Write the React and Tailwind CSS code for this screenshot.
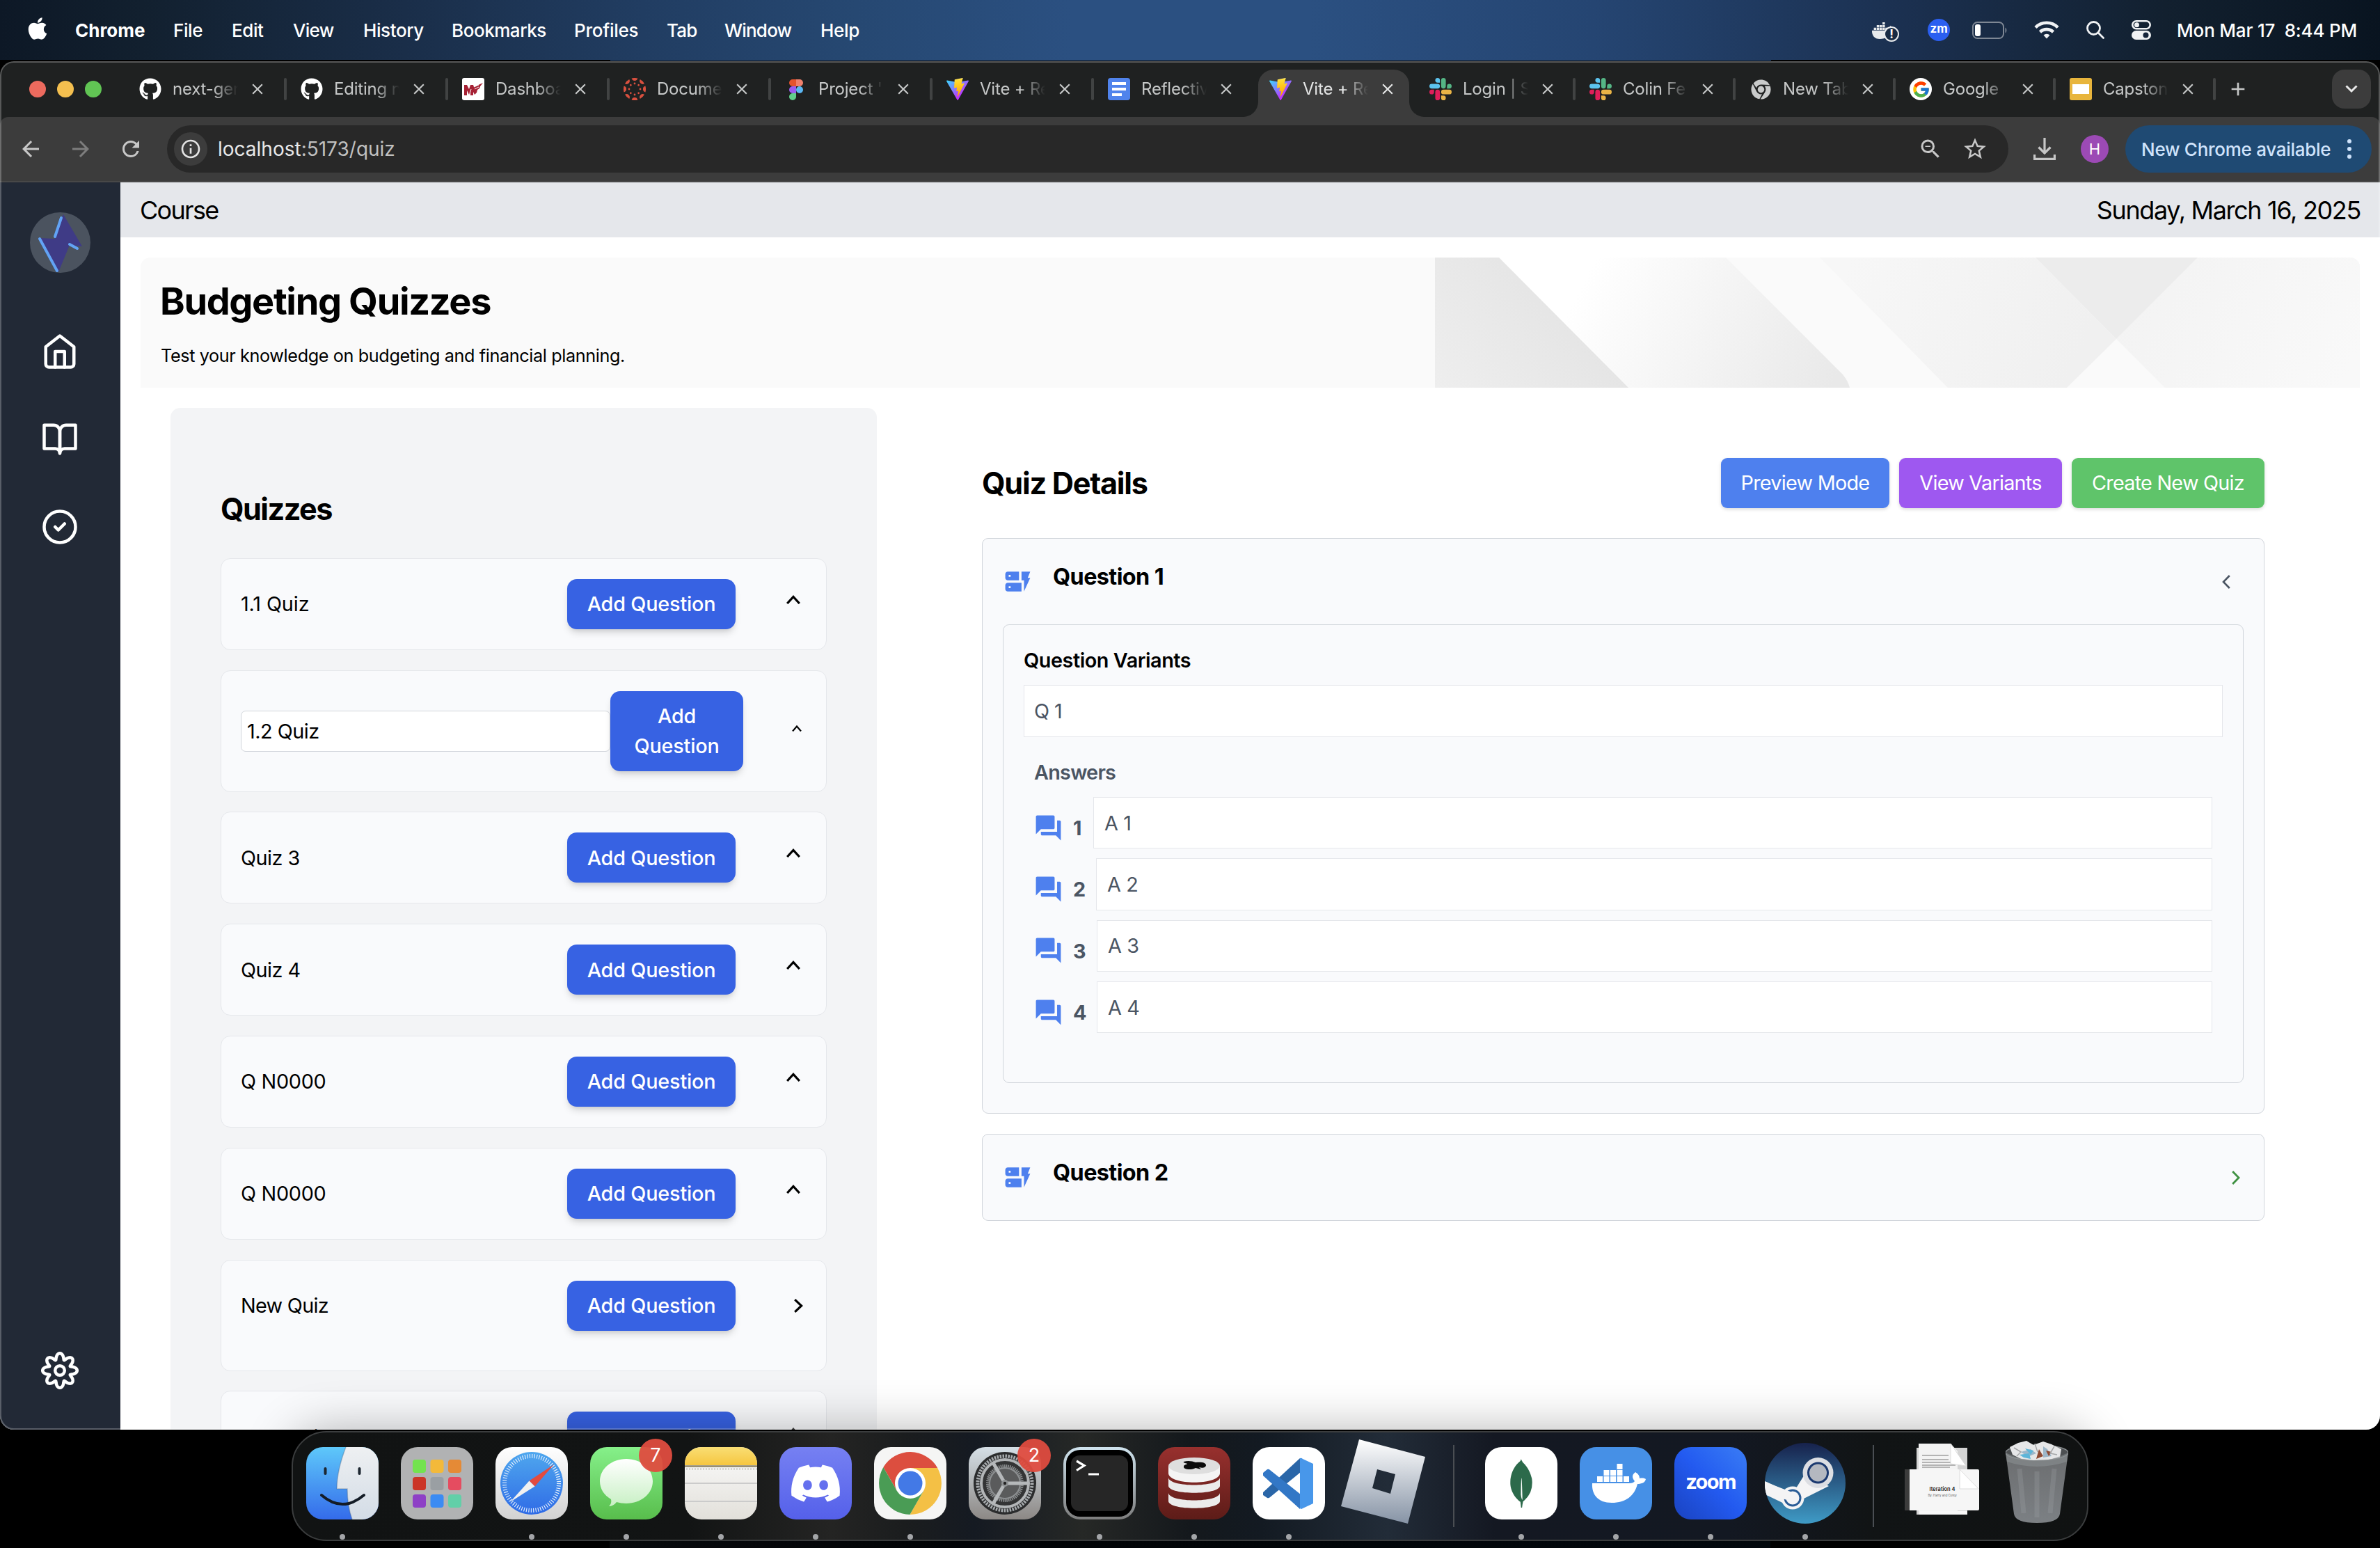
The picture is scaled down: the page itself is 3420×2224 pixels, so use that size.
import React from "react";
import { FaApple, FaGithub, FaDiscord, FaDocker, FaChrome } from "react-icons/fa";
import { FiHome, FiBookOpen } from "react-icons/fi";
import { FcGoogle } from "react-icons/fc";
import { MdDynamicForm, MdQuestionAnswer, MdArrowBack, MdArrowForward, MdRefresh, MdInfoOutline, MdZoomOut, MdStarBorder, MdClose, MdAdd } from "react-icons/md";
import { SiMongodb } from "react-icons/si";
import { CircleCheck } from "lucide-react";

/* ---------- small shared drawings ---------- */

function Vite() {
  return (
    <svg viewBox="0 0 256 257" className="h-8 w-8">
      <defs>
        <linearGradient id="va" x1="0%" x2="60%" y1="8%" y2="78%"><stop offset="0" stopColor="#41D1FF" /><stop offset="1" stopColor="#BD34FE" /></linearGradient>
        <linearGradient id="vb" x1="43%" x2="50%" y1="2%" y2="89%"><stop offset="0" stopColor="#FFEA83" /><stop offset=".1" stopColor="#FFDD35" /><stop offset="1" stopColor="#FFA800" /></linearGradient>
      </defs>
      <path fill="url(#va)" d="M255.153 37.938L134.897 252.976c-2.483 4.44-8.862 4.466-11.382.048L.875 37.958c-2.746-4.814 1.371-10.646 6.827-9.67l120.385 21.517a6.537 6.537 0 0 0 2.322-.004l117.867-21.483c5.438-.991 9.574 4.796 6.877 9.62Z" />
      <path fill="url(#vb)" d="M185.432.063L96.44 17.501a3.268 3.268 0 0 0-2.634 3.014l-5.474 92.456a3.268 3.268 0 0 0 3.997 3.378l24.777-5.718c2.318-.535 4.413 1.507 3.936 3.838l-7.361 36.047c-.495 2.426 1.782 4.5 4.151 3.78l15.304-4.649c2.372-.72 4.652 1.36 4.15 3.788l-11.698 56.621c-.732 3.542 3.979 5.473 5.943 2.437l1.313-2.028l72.516-144.72c1.215-2.423-.88-5.186-3.54-4.672l-25.505 4.922c-2.396.462-4.435-1.77-3.759-4.114l16.646-57.705c.677-2.35-1.37-4.583-3.769-4.113Z" />
    </svg>
  );
}

function Slack() {
  return (
    <svg viewBox="0 0 24 24" className="h-8 w-8">
      <path fill="#E01E5A" d="M5.042 15.165a2.528 2.528 0 0 1-2.52 2.523A2.528 2.528 0 0 1 0 15.165a2.527 2.527 0 0 1 2.522-2.52h2.52v2.52zM6.313 15.165a2.527 2.527 0 0 1 2.521-2.52 2.527 2.527 0 0 1 2.521 2.52v6.313A2.528 2.528 0 0 1 8.834 24a2.528 2.528 0 0 1-2.521-2.522v-6.313z" />
      <path fill="#5CC3EE" d="M8.834 5.042a2.528 2.528 0 0 1-2.521-2.52A2.528 2.528 0 0 1 8.834 0a2.528 2.528 0 0 1 2.521 2.522v2.52H8.834zM8.834 6.313a2.528 2.528 0 0 1 2.521 2.521 2.528 2.528 0 0 1-2.521 2.521H2.522A2.528 2.528 0 0 1 0 8.834a2.528 2.528 0 0 1 2.522-2.521h6.312z" />
      <path fill="#55B685" d="M18.956 8.834a2.528 2.528 0 0 1 2.522-2.521A2.528 2.528 0 0 1 24 8.834a2.528 2.528 0 0 1-2.522 2.521h-2.522V8.834zM17.688 8.834a2.528 2.528 0 0 1-2.523 2.521 2.527 2.527 0 0 1-2.52-2.521V2.522A2.527 2.527 0 0 1 15.165 0a2.528 2.528 0 0 1 2.523 2.522v6.312z" />
      <path fill="#E9B446" d="M15.165 18.956a2.528 2.528 0 0 1 2.523 2.522A2.528 2.528 0 0 1 15.165 24a2.527 2.527 0 0 1-2.52-2.522v-2.522h2.52zM15.165 17.688a2.527 2.527 0 0 1-2.52-2.523 2.526 2.526 0 0 1 2.52-2.52h6.313A2.527 2.527 0 0 1 24 15.165a2.528 2.528 0 0 1-2.522 2.523h-6.313z" />
    </svg>
  );
}

function Redhawk() {
  return (
    <svg viewBox="0 0 32 32" className="h-8 w-8">
      <rect width="32" height="32" rx="3" fill="#fff" />
      <path d="M3 25V10h4l3 6 2-6h4l1 3 13-6-4 5-1 3-3 2-1 4-3 3-2-4v5h-4v-7l-2 6-3-6v7z" fill="#a62134" />
      <path d="M17 13l7-3M18 16l6-3M11 22l2-6" stroke="#fff" strokeWidth="1" />
    </svg>
  );
}

function Canvas() {
  const spokes = [0, 45, 90, 135, 180, 225, 270, 315];
  return (
    <svg viewBox="0 0 32 32" className="h-8 w-8" fill="#d9503f">
      {spokes.map((a) => (
        <g key={a} transform={`rotate(${a} 16 16)`}>
          <path d="M11.600 .6a16 16 0 0 1 8.800 0a4.600 4.900 0 0 1-8.800 0z" />
          <circle cx="16" cy="8" r="1.400" />
        </g>
      ))}
    </svg>
  );
}

function Figma() {
  return (
    <svg viewBox="0 0 32 32" className="h-8 w-8">
      <path d="M11 2h5v10h-5a5 5 0 0 1 0-10z" fill="#e5532d" />
      <path d="M16 2h5a5 5 0 0 1 0 10h-5z" fill="#f0806c" />
      <path d="M11 12h5v10h-5a5 5 0 0 1 0-10z" fill="#9a5cf0" />
      <circle cx="21" cy="17" r="5" fill="#5bb7f4" />
      <path d="M11 22h5v5a5 5 0 1 1-5-5z" fill="#60cf8b" />
    </svg>
  );
}

const Docs = () => (
  <svg viewBox="0 0 32 32" className="h-8 w-8"><rect width="32" height="32" rx="4" fill="#5083ec" /><path d="M6 8h20M6 16h20M6 24h14" stroke="#fff" strokeWidth="4" /></svg>
);
const Slides = () => (
  <svg viewBox="0 0 32 32" className="h-8 w-8"><rect width="32" height="32" rx="3" fill="#e8b53c" /><rect x="4" y="9" width="24" height="14" fill="#fff" /></svg>
);
const Github = () => <FaGithub className="h-8 w-8 text-white" />;
const GreyChrome = () => <FaChrome className="h-[29px] w-[29px] text-[#c9cbcb]" />;
const Google = () => <span className="flex h-8 w-8 items-center justify-center rounded-full bg-white"><FcGoogle className="h-[27px] w-[27px]" /></span>;

/* ---------- menu bar ---------- */

const menus = [
  ["Chrome", "w-[141px] font-bold"],
  ["File", "w-[84px] tracking-[-0.4px]"],
  ["Edit", "w-[88px] tracking-[-0.4px]"],
  ["View", "w-[101px] tracking-[-0.7px]"],
  ["History", "w-[127px] tracking-[-0.4px]"],
  ["Bookmarks", "w-[176px] tracking-[-0.45px]"],
  ["Profiles", "w-[133px] tracking-[-0.25px]"],
  ["Tab", "w-[83px] tracking-[-0.8px]"],
  ["Window", "w-[138px] tracking-[-0.8px]"],
  ["Help", "w-[60px] tracking-[-0.3px]"],
];

function MenuBar() {
  return (
    <header className="flex h-[86px] shrink-0 items-center bg-[linear-gradient(90deg,#0d1826_0%,#12202f_6%,#1a2e49_17%,#213d62_27%,#264872_36%,#2b5081_45%,#2b5081_55%,#254572_67%,#1b3050_80%,#12202f_91%,#091420_100%)] text-[26px] font-medium text-white">
      <FaApple className="mb-1 ml-[38px] h-[36px] w-[32px]" />
      <nav className="ml-[38px] flex">
        {menus.map(([t, c]) => <span key={t} className={c}>{t}</span>)}
      </nav>
      <div className="ml-auto flex items-center pr-[33px]">
        <span className="relative mr-[40px] h-[32px] w-[38px]">
          <FaDocker className="h-[34px] w-[34px] -translate-x-0.5 text-[#e8eaec]" />
          <span className="absolute top-[11px] left-[15px] flex h-[22px] w-[22px] items-center justify-center rounded-full border-[2.5px] border-[#e8eaec] bg-[#182a43] text-[17px] leading-none font-bold">!</span>
        </span>
        <span className="mr-[32px] flex h-8 w-8 items-center justify-center rounded-full bg-[#2b5ff0] pb-[2px] text-[17px] font-bold">zm</span>
        <svg viewBox="0 0 51 25" className="mr-[38px] h-[25px] w-[51px]" fill="none">
          <rect x="1" y="1" width="44" height="23" rx="6.5" stroke="#7e8794" strokeWidth="2" />
          <rect x="4" y="4" width="8" height="17" rx="3" fill="#fff" />
          <path d="M47.500 8.500c2.500 1.500 2.500 6.500 0 8z" fill="#7e8794" />
        </svg>
        <svg viewBox="0 0 36 26" className="mr-[39px] h-[26px] w-[36px]" fill="none" stroke="#f0f2f4" strokeWidth="4.600">
          <path d="M2 9.500a22.500 22.500 0 0 1 32 0" />
          <path d="M8.500 16a13.500 13.500 0 0 1 19 0" />
          <path d="M13.500 20.500a6.500 6.500 0 0 1 9 0L18 25.500z" fill="#f0f2f4" stroke="none" />
        </svg>
        <svg viewBox="0 0 26 26" className="mr-[39px] h-[26px] w-[26px]" fill="none" stroke="#f0f2f4" strokeWidth="2.800" strokeLinecap="round">
          <circle cx="10.500" cy="10.500" r="9" /><path d="M17 17l7.500 7.500" />
        </svg>
        <svg viewBox="0 0 28 28" className="mr-[37px] h-[28px] w-[28px]" fill="none">
          <rect x="1.300" y="1.300" width="25.400" height="11" rx="5.500" stroke="#f0f2f4" strokeWidth="2.600" />
          <circle cx="7.500" cy="6.800" r="3.500" fill="#f0f2f4" />
          <rect x="0" y="15" width="28" height="13" rx="6.500" fill="#f0f2f4" />
          <circle cx="20.500" cy="21.500" r="4" fill="#15243a" />
        </svg>
        <span className="tracking-[-0.2px] whitespace-pre">Mon Mar 17  8:44 PM</span>
      </div>
    </header>
  );
}

/* ---------- browser chrome ---------- */

const tabs = [
  [Github, "next-ger"], [Github, "Editing n"], [Redhawk, "Dashboa"], [Canvas, "Docume"], [Figma, "Project '"],
  [Vite, "Vite + Re"], [Docs, "Reflectiv"], [Vite, "Vite + Re"], [Slack, "Login | S"], [Slack, "Colin Fe"],
  [GreyChrome, "New Tab"], [Google, "Google"], [Slides, "Capston"],
];

function Tab({ Icon, title, i }) {
  const active = i === 7;
  return (
    <div className={"relative flex h-[80px] shrink-0 items-center pl-[22px] " + (i < 7 ? "w-[232px]" : "w-[230px]")}>
      {active && (
        <svg viewBox="0 0 266 68" className="absolute bottom-0 left-[-17px] h-[68px] w-[266px]">
          <path d="M0 68a22 22 0 0 0 23-22V22A22 22 0 0 1 45 0H218a22 22 0 0 1 22 22V46a22 22 0 0 0 23 22z" fill="#3c3c3c" />
        </svg>
      )}
      <span className="relative flex h-8 w-8 items-center justify-center"><Icon /></span>
      <span className={"relative ml-4 w-[94px] overflow-hidden text-[24px] tracking-[-0.2px] whitespace-nowrap [mask-image:linear-gradient(to_right,black_62%,transparent_100%)] " + (active ? "text-[#e4e5e5]" : "text-[#c6c8c8]")}>{title}</span>
      <MdClose className={"relative ml-[15px] h-[26px] w-[26px] " + (active ? "text-[#e4e5e5]" : "text-[#c6c8c8]")} />
      {i !== 6 && i !== 7 && <span className="ml-auto h-8 w-[4px] translate-x-[2px] rounded bg-[#414343]" />}
    </div>
  );
}

function TabStrip() {
  return (
    <div className="flex h-[80px] shrink-0 items-center bg-[#1f2121]">
      <div className="flex w-[178px] shrink-0 gap-4 pl-[42px]">
        <span className="h-6 w-6 rounded-full bg-[#ec6a5e]" />
        <span className="h-6 w-6 rounded-full bg-[#f4bf4f]" />
        <span className="h-6 w-6 rounded-full bg-[#61c554]" />
      </div>
      {tabs.map(([Icon, title], i) => <Tab key={i} Icon={Icon} title={title} i={i} />)}
      <MdAdd className="ml-[18px] h-[32px] w-[32px] text-[#c6c8c8]" />
      <span className="mr-[13px] ml-auto flex h-14 w-14 items-center justify-center rounded-[18px] bg-[#3c3c3c]">
        <svg viewBox="0 0 18 12" className="h-3 w-[18px]" fill="none" stroke="#e8e8e8" strokeWidth="3"><path d="M1.500 1.500L9 9l7.500-7.500" /></svg>
      </span>
    </div>
  );
}

function Toolbar() {
  return (
    <div className="flex h-[94px] shrink-0 items-center rounded-t-[12px] border-b-2 border-[#484848] bg-[#3c3c3c] text-[#c7c7c7]">
      <MdArrowBack className="ml-[26px] h-9 w-9" />
      <MdArrowForward className="ml-[36px] h-9 w-9 text-[#7d7d7d]" />
      <MdRefresh className="ml-[36px] h-9 w-9" />
      <div className="ml-[34px] flex h-[68px] w-[2646px] items-center rounded-full bg-[#282828] pl-[10px]">
        <span className="flex h-12 w-12 items-center justify-center rounded-full bg-[#3c3c3c]">
          <MdInfoOutline className="h-8 w-8 text-[#e3e3e3]" />
        </span>
        <span className="ml-[15px] text-[28px] text-[#c0c0c0]"><span className="text-[#e8e8e8]">localhost</span>:5173/quiz</span>
        <MdZoomOut className="ml-auto h-9 w-9" />
        <MdStarBorder className="mr-[29px] ml-[27px] h-[38px] w-[38px]" />
      </div>
      <svg viewBox="0 0 32 32" className="ml-[36px] h-8 w-8" fill="none" stroke="#c7c7c7" strokeWidth="3.200">
        <path d="M16 0v21M7.500 13.500L16 22l8.500-8.500M1.600 24v6.400h28.800V24" />
      </svg>
      <span className="ml-[36px] flex h-10 w-10 items-center justify-center rounded-full bg-[#9c4ab5] text-[22px] text-white">H</span>
      <div className="ml-[24px] flex h-[68px] w-[354px] items-center rounded-full bg-[#1f4a73] pl-[23px] text-[26px] font-medium tracking-[-0.28px] text-[#cfe3fb]">
        New Chrome available
        <span className="mr-[29px] ml-auto flex flex-col gap-[5px]">
          <i className="h-[6px] w-[6px] rounded-full bg-[#cfe3fb]" /><i className="h-[6px] w-[6px] rounded-full bg-[#cfe3fb]" /><i className="h-[6px] w-[6px] rounded-full bg-[#cfe3fb]" />
        </span>
      </div>
    </div>
  );
}

/* ---------- web page ---------- */

function gearPath() {
  const p = [];
  for (let k = 0; k < 160; k++) {
    const t = (k / 160) * Math.PI * 2;
    const u = t - 0.05 * Math.sin(8 * t) * -1;
    const r = 20.4 + 4.4 * Math.cos(8 * t);
    p.push(`${(27 + r * Math.cos(u)).toFixed(2)} ${(27 + r * Math.sin(u)).toFixed(2)}`);
  }
  return "M" + p.join("L") + "Z";
}

function Sidebar() {
  return (
    <aside className="flex w-[173px] shrink-0 flex-col items-center bg-[#222936] pr-px text-white">
      <span className="mt-[43px] h-[87px] w-[87px] overflow-hidden rounded-full bg-[#4b535f]">
        <svg viewBox="0 0 87 87" className="h-full w-full" strokeLinecap="round">
          <path d="M46 7L48 3L75 49L57 47L41 86L14 37L36 38z" fill="#3f3b86" />
          <path d="M45 8L36 35M14 38L39 84M57 46L68 52" stroke="#62a3f5" strokeWidth="4" fill="none" />
        </svg>
      </span>
      <FiHome className="mt-[86px] h-[54px] w-[54px]" />
      <FiBookOpen className="mt-[72px] h-[54px] w-[54px]" />
      <CircleCheck className="mt-[72px] h-[54px] w-[54px]" strokeWidth={2} />
      <svg viewBox="0 0 54 54" className="mt-auto mb-[58px] h-[54px] w-[54px]" fill="none" stroke="#fff" strokeWidth="4.500">
        <path d={gearPath()} strokeLinejoin="round" /><circle cx="27" cy="27" r="6.800" />
      </svg>
    </aside>
  );
}

function Banner() {
  return (
    <section className="mx-[29px] mt-[29px] flex h-[187px] overflow-hidden rounded-t-[14px] bg-[#fafafa]">
      <div className="w-[1860px] shrink-0 pl-[28px]">
        <h1 className="mt-[30px] text-[54px] leading-[65px] font-bold tracking-[-1.35px]">Budgeting Quizzes</h1>
        <p className="mt-[28px] ml-px text-[25.2px] leading-[36px] tracking-[-0.37px]">Test your knowledge on budgeting and financial planning.</p>
      </div>
      <svg viewBox="0 0 1329 187" className="h-[187px] w-[1329px]">
        <defs>
          <linearGradient id="ba" gradientUnits="userSpaceOnUse" x1="0" y1="187" x2="180" y2="30"><stop offset="0" stopColor="#eeeeee" /><stop offset="1" stopColor="#e4e4e4" /></linearGradient>
          <linearGradient id="bb" gradientUnits="userSpaceOnUse" x1="200" y1="60" x2="540" y2="240"><stop offset="0" stopColor="#ffffff" /><stop offset="1" stopColor="#e9e9e9" /></linearGradient>
          <linearGradient id="bc" gradientUnits="userSpaceOnUse" x1="600" y1="0" x2="920" y2="150"><stop offset="0" stopColor="#f7f7f7" /><stop offset="1" stopColor="#f0f0f0" /></linearGradient>
          <linearGradient id="bd" gradientUnits="userSpaceOnUse" x1="960" y1="0" x2="1300" y2="187"><stop offset="0" stopColor="#f2f2f2" /><stop offset="1" stopColor="#f9f9f9" /></linearGradient>
        </defs>
        <rect width="1329" height="187" fill="#fafafa" />
        <path d="M0 0H418L586 168Q594 178 596 187H0z" fill="url(#bb)" />
        <path d="M0 0H92L278 187H0z" fill="url(#ba)" />
        <path d="M553 0H863L979 117L908 187H737z" fill="url(#bc)" />
        <path d="M1096 0H1329V187H1049L979 117z" fill="url(#bd)" />
        <path d="M863 0H1096L979 117z" fill="#ececec" />
      </svg>
    </section>
  );
}

const quizzes = [
  ["1.1 Quiz", "up", "tracking-[-0.1px]"], ["1.2 Quiz", "edit", "tracking-[-0.5px]"], ["Quiz 3", "up", "tracking-[-0.5px]"], ["Quiz 4", "up", "tracking-[-0.5px]"],
  ["Q N0000", "up", "tracking-[-0.3px]"], ["Q N0000", "up", "tracking-[-0.3px]"], ["New Quiz", "open", "tracking-[-0.7px]"], ["New Quiz", "up", "tracking-[-0.7px]"],
];

function Up({ small }) {
  return small
    ? <svg viewBox="0 0 14 9" className="mt-[-8px] mr-[7px] ml-auto h-[9px] w-[14px]" fill="none" stroke="#000" strokeWidth="2.200"><path d="M1 8.500L7 1.500l6 7" /></svg>
    : <svg viewBox="0 0 20 13" className="mt-[-13px] mr-[9px] ml-auto h-[13px] w-[20px]" fill="none" stroke="#000" strokeWidth="3.200"><path d="M1.200 12L10 2.400l8.800 9.600" /></svg>;
}

function QuizCard({ name, kind, track }) {
  const btn = "flex items-center justify-center rounded-[14px] bg-[#3762e3] text-center text-[28.8px] font-medium tracking-[-0.2px] text-white shadow-[0_7px_11px_-2px_rgba(0,0,0,0.14),0_4px_7px_-4px_rgba(0,0,0,0.12)]";
  if (kind === "edit")
    return (
      <div className="flex h-[175px] shrink-0 items-center rounded-[14px] border border-[#e5e7eb] bg-[#f9fafc] px-[28px]">
        <div className={"flex h-[59px] w-[531px] items-center rounded-[7px] border border-[#d1d5db] bg-white pl-[8px] text-[28.8px] " + track}>{name}</div>
        <span className={btn + " h-[115px] w-[191px] px-[20px] leading-[43.2px]"}>Add<br />Question</span>
        <Up small />
      </div>
    );
  return (
    <div className={"shrink-0 rounded-[14px] border border-[#e5e7eb] bg-[#f9fafc] px-[28px] pt-[29px] " + (kind === "open" ? "h-[160px]" : "h-[132px]")}>
      <div className="flex h-[72px] items-center">
        <span className={"w-[469px] text-[28.8px] " + track}>{name}</span>
        <span className={btn + " h-[72px] w-[242px]"}>Add Question</span>
        {kind === "open"
          ? <svg viewBox="0 0 13 20" className="mr-[5px] ml-auto h-5 w-[13px]" fill="none" stroke="#000" strokeWidth="3.200"><path d="M1.200 1.200L10.600 10l-9.400 8.800" /></svg>
          : <Up />}
      </div>
    </div>
  );
}

function QuizList() {
  return (
    <section className="ml-[72px] flex w-[1015px] shrink-0 flex-col gap-[28.8px] rounded-t-[14px] bg-[#f3f4f6] px-[72px] pt-[116px]">
      <h2 className="mb-[13px] h-[58px] text-[43.2px] leading-[58px] font-bold tracking-[-1.55px]">Quizzes</h2>
      {quizzes.map(([n, k, t], i) => <QuizCard key={i} name={n} kind={k} track={t} />)}
    </section>
  );
}

const answers = ["A 1", "A 2", "A 3", "A 4"];

function QuestionHead({ n, open }) {
  return (
    <div className="flex items-start">
      <MdDynamicForm className="mt-[40px] h-[43px] w-[43px] text-[#4e80ee]" />
      <h3 className="mt-[30px] ml-[29px] text-[32.4px] leading-[50px] font-bold tracking-[-0.6px]">Question {n}</h3>
      {open
        ? <svg viewBox="0 0 12 20" className="mt-[52px] mr-[19px] ml-auto h-5 w-3" fill="none" stroke="#4b5563" strokeWidth="2.600"><path d="M10.800 1L2 10l8.800 9" /></svg>
        : <svg viewBox="0 0 12 20" className="mt-[52px] mr-[5px] ml-auto h-5 w-3" fill="none" stroke="#3f9142" strokeWidth="2.800"><path d="M1.200 1L10 10l-8.800 9" /></svg>}
    </div>
  );
}

function Details() {
  return (
    <section className="ml-[151px] w-[1843px] pt-[72px]">
      <div className="flex h-[72px] items-center gap-[14px] text-[28.800px] tracking-[-0.75px] text-white">
        <h2 className="mr-auto text-[43.2px] font-bold tracking-[-1.25px] text-black">Quiz Details</h2>
        <span className="flex h-[72px] w-[242px] items-center justify-center rounded-[9px] bg-[#4e80ee] shadow-[0_2px_5px_rgba(0,0,0,0.14)]">Preview Mode</span>
        <span className="flex h-[72px] w-[234px] items-center justify-center rounded-[9px] bg-[#9e58f0] shadow-[0_2px_5px_rgba(0,0,0,0.14)]">View Variants</span>
        <span className="flex h-[72px] w-[277px] items-center justify-center rounded-[9px] bg-[#5fc46a] shadow-[0_2px_5px_rgba(0,0,0,0.14)]">Create New Quiz</span>
      </div>
      <div className="mt-[43px] h-[827px] rounded-[9px] border border-[#d1d5db] bg-[#f9fafc] px-[29px]">
        <div className="h-[123px]"><QuestionHead n={1} open /></div>
        <div className="h-[659px] rounded-[9px] border border-[#d1d5db] px-[29px] pt-[32px] text-[28.8px]">
          <p className="h-[38px] leading-[38px] font-semibold tracking-[-0.45px]">Question Variants</p>
          <div className="mt-[16px] flex h-[75px] items-center border border-[#e5e7eb] bg-white pl-[14px] tracking-[-0.5px] text-[#4b5563]">Q 1</div>
          <div className="px-[15px] text-[#4b5563]">
            <p className="mt-[32px] mb-[16px] h-[38px] leading-[38px] font-semibold tracking-[-0.75px]">Answers</p>
            <div className="flex flex-col gap-[14.200px]">
              {answers.map((a, i) => (
                <div key={a} className="flex h-[74.200px] items-center">
                  <MdQuestionAnswer className="mt-[14px] h-[43px] w-[43px] -translate-x-px text-[#4e80ee]" />
                  <span className={"mt-[15px] ml-[13px] font-bold " + (i === 0 ? "w-[29px]" : i === 1 ? "w-[33px]" : "w-[34px]")}>{i + 1}</span>
                  <span className="flex h-[74.200px] flex-1 items-center border border-[#e5e7eb] bg-white pl-[15px] tracking-[-0.3px]">{a}</span>
                </div>
              ))}
            </div>
          </div>
        </div>
      </div>
      <div className="mt-[29px] h-[125px] rounded-[9px] border border-[#d1d5db] bg-[#f9fafc] px-[29px]"><QuestionHead n={2} /></div>
    </section>
  );
}

/* ---------- dock ---------- */

function Tile({ children, bg }) {
  return (
    <svg viewBox="0 0 104 104" className="h-[104px] w-[104px]">
      <rect width="104" height="104" rx="24" fill={bg} />
      {children}
    </svg>
  );
}

function Gradients() {
  const g = [
    ["gFind", "#5ec8fa", "#346bea"], ["gMsg", "#86f08a", "#58bd4c"], ["gDb", "#98302e", "#5d1c18"],
    ["gNote", "#f9de74", "#f6c640"], ["gPaper", "#fbfbfb", "#e2e0da"], ["gSaf", "#ffffff", "#d2d2d2"], ["gSea", "#4fa7ee", "#2f6be6"], ["gSet", "#d5dfe6", "#8c8885"],
    ["gTerm", "#cfe3ee", "#7d7d7d"], ["gRob", "#ffffff", "#8693a5"], ["gSteam", "#17224c", "#3f9bc6"], ["gCan", "#6b6d6f", "#7c8084"], ["gFace", "#eef0f2", "#d3dce6"], ["gBub", "#ffffff", "#c8f0c4"],
  ];
  return (
    <svg className="absolute h-0 w-0">
      <defs>{g.map(([id, a, b]) => <linearGradient key={id} id={id} x1="0" x2="0" y1="0" y2="1"><stop offset="0" stopColor={a} /><stop offset="1" stopColor={b} /></linearGradient>)}</defs>
    </svg>
  );
}

const Finder = () => (
  <svg viewBox="0 0 104 104" className="h-[104px] w-[104px]">
    <clipPath id="tileClip"><rect width="104" height="104" rx="24" /></clipPath>
    <g clipPath="url(#tileClip)">
      <rect width="104" height="104" fill="url(#gFind)" />
      <path d="M57 0Q44 34 44 60H59Q59 84 66 104H104V0z" fill="url(#gFace)" />
      <path d="M57 0Q44 34 44 60H59Q59 84 66 104" fill="none" stroke="#49617d" strokeOpacity=".35" strokeWidth="1.500" />
    </g>
    <path d="M27.500 31v7M76.500 31v7" stroke="#1c2630" strokeWidth="4" strokeLinecap="round" />
    <path d="M22 69Q52 95 83 69" fill="none" stroke="#141c26" strokeWidth="4" strokeLinecap="round" />
  </svg>
);

const padColors = ["#73e34f", "#f3b93a", "#e58a36", "#cb3527", "#9a9fa3", "#e54c60", "#8e40c6", "#3b8bf3", "#62cfa8"];
const Launchpad = () => (
  <Tile bg="#b1b2b3">
    {padColors.map((c, i) => <rect key={i} x={17 + (i % 3) * 25.500} y={18 + Math.floor(i / 3) * 25} width="19" height="19" rx="4" fill={c} />)}
  </Tile>
);

const Safari = () => (
  <Tile bg="url(#gSaf)">
    <circle cx="52" cy="52" r="45" fill="url(#gSea)" />
    <circle cx="52" cy="52" r="39" fill="none" stroke="#e9f3fd" strokeWidth="6" strokeDasharray="1.100 2.303" />
    <path d="M84 25L56.500 56.500L48.500 48.500z" fill="#e34b3f" /><path d="M21 79L48.500 48.500L56.500 56.500z" fill="#f1f1f1" />
  </Tile>
);

const Messages = () => (
  <Tile bg="url(#gMsg)"><path d="M52 17c21 0 38 14 38 32s-17 32-38 32c-5 0-10-1-14-2-3 4-7 6-11 6 3-3 4-6 3-10-10-6-16-15-16-26 0-18 17-32 38-32z" fill="url(#gBub)" /></Tile>
);

const Notes = () => (
  <svg viewBox="0 0 104 104" className="h-[104px] w-[104px]">
    <g clipPath="url(#tileClip)">
      <rect width="104" height="104" fill="url(#gPaper)" /><rect width="104" height="26" fill="url(#gNote)" />
      <path d="M0 27.500H104" stroke="#8d8468" strokeWidth="2.500" />
      <path d="M2 31.500H104" stroke="#c6c4c0" strokeWidth="2" strokeDasharray="2 2" /><path d="M0 52H104M0 78H104" stroke="#cbcbcb" strokeWidth="2" />
    </g>
  </svg>
);

const Discord = () => <span className="flex h-[104px] w-[104px] items-center justify-center rounded-[24px] bg-gradient-to-b from-[#7680f2] to-[#5560ea]"><FaDiscord className="h-[76px] w-[76px] text-white" /></span>;

const Chrome = () => (
  <Tile bg="#f5f5f4">
    <path d="M13.350 29.050A45 45 0 0 1 91.200 30H52L32.950 63z" fill="#dc4e3f" />
    <path d="M91.200 30A45 45 0 0 1 51.450 96.950L71.050 63L52 30z" fill="#f4c045" />
    <path d="M51.450 96.950A45 45 0 0 1 13.350 29.050L32.950 63H71.050z" fill="#4a9c55" />
    <circle cx="52" cy="52" r="22" fill="#fff" /><circle cx="52" cy="52" r="17.500" fill="#4379e6" />
  </Tile>
);

const Settings = () => (
  <Tile bg="url(#gSet)">
    <circle cx="52" cy="52" r="45" fill="#2b2c2d" />
    <circle cx="52" cy="52" r="39" fill="none" stroke="#a7abae" strokeWidth="5" strokeDasharray="2.500 1.500" />
    <circle cx="52" cy="52" r="34" fill="#333435" stroke="#b2b5b7" strokeWidth="4" />
    <circle cx="52" cy="52" r="25" fill="#4d4e4f" stroke="#8d9092" strokeWidth="4" strokeDasharray="1.500 1.200" />
    <circle cx="52" cy="52" r="22" fill="#5a5b5c" stroke="#8d9092" strokeWidth="2" />
    <path d="M52 52H86M52 52L35 22.500M52 52L35 81.500" stroke="#b5b8ba" strokeWidth="5" />
    <circle cx="52" cy="52" r="5" fill="#8f9294" /><circle cx="52" cy="52" r="2.200" fill="#222" />
  </Tile>
);

const Terminal = () => (
  <Tile bg="url(#gTerm)">
    <rect x="4" y="4" width="96" height="96" rx="20" fill="#000" /><rect x="11" y="12" width="82" height="80" rx="12" fill="#262626" />
    <path d="M19 20l11 6.500-11 7M36 39h15" fill="none" stroke="#fff" strokeWidth="3.200" />
  </Tile>
);

const Database = () => (
  <Tile bg="url(#gDb)">
    {[62, 40].map((y) => <path key={y} d={`M15 ${y + 4}V${y + 16}C17 ${y + 29} 87 ${y + 29} 89 ${y + 16}V${y + 4}C87 ${y + 18} 17 ${y + 18} 15 ${y + 4}z`} fill="#ebebeb" />)}
    <path d="M15 27v11c2 17 72 17 74 0V27z" fill="#f4f4f4" /><ellipse cx="52" cy="27" rx="37" ry="12" fill="#dedede" />
    <path d="M37 21c6-2 12-1 17 1 8-1 15 0 15 4 0 3-5 5-10 3l3 3-8-2c-4 3-18 3-17-2 0-3 5-3 5-4s-7-1-5-3z" fill="#0b0b0b" />
  </Tile>
);

const VSCode = () => (
  <Tile bg="#fff">
    <path d="M68 16L15 65v4l6 4q2 1 4-1L69 36z" fill="#2a66a8" />
    <path d="M68 89L15 41v-4l6-5q2-1 4 1L69 68z" fill="#3277c6" /><path d="M68 16q2-1 4 1L87 24v57L70 89q-2 0-2-2z" fill="#4897ea" />
  </Tile>
);

const Roblox = () => (
  <svg viewBox="0 0 122 122" className="mt-[-6px] h-[122px] w-[122px]">
    <path fillRule="evenodd" d="M26 1L121 26L96 122L0 97zM52 44L45 71L71 79L78 51z" fill="url(#gRob)" />
  </svg>
);

const Mongo = () => <span className="flex h-[104px] w-[104px] items-center justify-center rounded-[24px] bg-white"><SiMongodb className="h-[70px] w-[70px] text-[#2c6a4b]" /></span>;

const Docker = () => (
  <Tile bg="#4690e6">
    {[[25, 42], [34.500, 42], [44, 42], [53.500, 42], [63, 42], [34.500, 33], [44, 33], [53.500, 33], [53.500, 24]].map(([x, y]) => <rect key={x + "-" + y} x={x} y={y} width="8" height="8" fill="#fff" />)}
    <path d="M18 52H72q5 0 7-3c-5-6-3-10 1-13 5 3 6 6 6 9 4-1 8 0 9 1-1 5-6 7-12 7C79 70 66 80 46 80 26 80 17 68 18 52z" fill="#fff" />
  </Tile>
);

const Zoom = () => <span className="flex h-[104px] w-[104px] items-center justify-center rounded-[24px] bg-gradient-to-bl from-[#3b7cf5] via-[#235af0] to-[#1a43c0] pb-1 text-[29px] font-bold tracking-[-1.600px] text-white">zoom</span>;

const Steam = () => (
  <svg viewBox="0 0 116 116" className="h-[116px] w-[116px]">
    <clipPath id="steamClip"><circle cx="58" cy="58" r="58" /></clipPath>
    <g clipPath="url(#steamClip)">
      <rect width="116" height="116" fill="url(#gSteam)" />
      <path d="M-2 54L40 73L58 44L92 62L52 82L38 92L-2 73z" fill="#f4f4f5" />
      <circle cx="76.500" cy="43" r="22" fill="#dcdee3" /><circle cx="76.500" cy="43" r="14" fill="#b4b8c0" stroke="#1c3a70" strokeWidth="3" />
      <circle cx="40" cy="79" r="16.500" fill="#f4f4f5" /><circle cx="40" cy="79" r="11" fill="none" stroke="#2a5c96" strokeWidth="3" /><path d="M0 56L42 72L38 84L0 72z" fill="#f4f4f5" />
    </g>
  </svg>
);

const Files = () => (
  <svg viewBox="0 0 108 104" className="mt-[-12px] h-[104px] w-[108px]">
    <path d="M17 7H90V103H17z" fill="#d4d4d4" /><path d="M20 1H66L76 12V103H20z" fill="#f3f3f3" /><path d="M90 98V103H22V98z" fill="#f7f7f7" />
    <path d="M25 18h38M25 24h38M25 28h48M25 32h48M25 35h40" stroke="#777" strokeWidth="1.200" />
    <path d="M66 1L88 33L66 30z" fill="#fff" stroke="#ddd" />
    <rect x="0" y="38" width="8" height="59" fill="#3c3c3c" /><path d="M7 38H105q2 0 2 2V95q0 2-2 2H7z" fill="#f6f6f6" />
    <path d="M79 38L106 66H79z" fill="#fff" stroke="#dcdcdc" />
    <text x="54" y="69" textAnchor="middle" fontSize="7.500" fontWeight="600" fontFamily="Inter" fill="#222">Iteration 4</text>
    <text x="54" y="77" textAnchor="middle" fontSize="4.300" fontFamily="Inter" fill="#555">By: Harry and Corey</text>
  </svg>
);

const Trash = () => (
  <svg viewBox="0 0 90 119" className="mt-[-4px] h-[119px] w-[90px]">
    <path d="M0 17L12 105Q14 118 45 118T78 105L90 17Q45 34 0 17z" fill="url(#gCan)" />
    <path d="M20 40L26 104M45 44V110M70 40L64 104" stroke="#a5a9ac" strokeWidth="7" strokeOpacity=".25" />
    <ellipse cx="45" cy="17" rx="45" ry="11" fill="#4d5052" stroke="#8a8e91" strokeWidth="1.500" />
    <path d="M6 9L18 3L30 0L40 6L54 1L66 5L80 12L78 24L62 27L40 28L22 26L10 20z" fill="#e6e7e8" />
    <path d="M22 16L36 12L44 18L32 23zM54 8L60 12L66 22L54 24z" fill="#9db7c9" /><path d="M28 11l12 3-4 6zM20 20l14-2 2 8-10-2z" fill="#5eb5d8" /><path d="M48 12l6 10-10 4zM58 14l8 2-4 6z" fill="#8d4a33" />
    <path d="M12 10l10 6-6 6M42 4l4 12M70 8l-6 10 10 2" stroke="#a4a6a8" strokeWidth="1.500" fill="none" />
    <path d="M0 17Q45 40 90 17L88 30Q45 44 2 30z" fill="#8d9194" fillOpacity=".55" />
  </svg>
);

const dockApps = [
  [Finder, 1], [Launchpad, 0], [Safari, 1], [Messages, 1, "7"], [Notes, 1], [Discord, 1], [Chrome, 1], [Settings, 0, "2"], [Terminal, 1], [Database, 1], [VSCode, 1], [Roblox, 0],
];
const dockRight = [[Mongo, 1], [Docker, 1], [Zoom, 1], [Steam, 1]];

function DockItem({ Icon, dot, badge }) {
  return (
    <div className="relative flex h-[154px] w-[136px] flex-col items-center">
      <div className="flex h-[146px] items-center"><Icon /></div>
      {dot ? <span className="h-2 w-2 rounded-full bg-[#a3a5a8]" /> : null}
      {badge && <span className="absolute top-[9px] left-[86px] flex h-12 w-12 items-center justify-center rounded-full bg-[#df4c3f]/95 text-[27px] text-white">{badge}</span>}
    </div>
  );
}

function Dock() {
  return (
    <div className="relative mt-[2px] ml-[419px] flex h-[158px] w-[2582px] shrink-0 rounded-[50px] border-2 border-[#3b3d3e] bg-[linear-gradient(90deg,#111313_0%,#121414_22%,#242423_30%,#1b1d1e_34%,#151a22_38%,#262826_44%,#14181c_50%,#131a22_54%,#222c38_61%,#141822_67%,#131822_80%,#111415_88%,#101212_100%)] pl-[3px] shadow-[0_0_70px_rgba(0,0,0,0.3)]">
      <Gradients />
      {dockApps.map(([I, d, b], i) => <DockItem key={i} Icon={I} dot={d} badge={b} />)}
      <span className="mt-[18px] mr-[28px] ml-[32px] h-[118px] w-[2px] bg-[#4a4e53]" />
      {dockRight.map(([I, d], i) => <DockItem key={i} Icon={I} dot={d} />)}
      <span className="mt-[18px] mr-[30px] ml-[29px] h-[118px] w-[2px] bg-[#4a4e53]" />
      <DockItem Icon={Files} /><DockItem Icon={Trash} />
    </div>
  );
}

/* ---------- desktop ---------- */

export default function App() {
  return (
    <div className="flex h-[2224px] w-[3420px] flex-col overflow-hidden bg-black font-['Inter',sans-serif] text-black">
      <MenuBar />
      <div className="ml-[877px] h-[2px] w-[1668px] shrink-0 border-t border-[#2b4f80]" />
      <div className="relative flex h-[1966px] shrink-0 flex-col overflow-hidden rounded-[20px] bg-[#1f2121]">
        <TabStrip />
        <Toolbar />
        <div className="flex h-[1792px] shrink-0 overflow-hidden bg-white">
          <Sidebar />
          <main className="flex min-w-0 flex-1 flex-col">
            <div className="flex h-[79px] shrink-0 items-center justify-between bg-[#e5e7eb] px-[28px] text-[36px]">
              <span className="tracking-[-1.7px]">Course</span><span className="tracking-[-1.35px]">Sunday, March 16, 2025</span>
            </div>
            <Banner />
            <div className="mt-[29px] flex min-h-0 flex-1"><QuizList /><Details /></div>
          </main>
        </div>
        <div className="pointer-events-none absolute inset-0 rounded-[20px] border-2 border-white/25" />
      </div>
      <Dock />
      <div className="ml-[876px] h-[10px] w-[1668px] shrink-0 bg-[linear-gradient(90deg,#0a0d10,#020407_30%,#030a0f)]" />
    </div>
  );
}
